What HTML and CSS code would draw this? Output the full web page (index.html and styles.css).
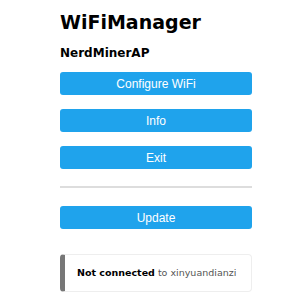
FILE: index.html
```html
<!DOCTYPE html>
<html lang="en">
<head>
  <meta charset="UTF-8">
  <title>WiFiManager</title>
  <link rel="stylesheet" href="styles.css">
</head>
<body>
  <div class="wrap">
    <h1>WiFiManager</h1>
    <h3>NerdMinerAP</h3>
    <form action="/wifi"><button>Configure WiFi</button></form>
    <form action="/info"><button>Info</button></form>
    <form action="/exit"><button>Exit</button></form>
    <hr>
    <form action="/update"><button>Update</button></form>
    <div class="msg"><strong>Not connected</strong> to xinyuandianzi</div>
  </div>
</body>
</html>
```

FILE: styles.css
```css
body {
  margin: 0;
  padding: 10px 48px 0 60px;
  font-family: "DejaVu Sans", Verdana, sans-serif;
  background: #fff;
}

.wrap {
  display: flex;
  flex-direction: column;
}

h1 {
  margin: 0 0 12px;
  font-size: 19px;
  line-height: 24px;
  color: #000;
}

h3 {
  margin: 0 0 12px;
  font-size: 12px;
  line-height: 14px;
  color: #000;
}

form {
  margin: 0 0 14px;
}

button {
  display: block;
  width: 100%;
  height: 23px;
  padding: 0;
  border: 0;
  border-radius: 3px;
  background-color: #1fa3ec;
  color: #fff;
  font-family: "Liberation Sans", Arial, sans-serif;
  font-size: 12px;
  cursor: pointer;
}

hr {
  margin: 3px 0 18px;
  border: 0;
  border-top: 2px solid #ddd;
}

.msg {
  margin-top: 11px;
  height: 38px;
  box-sizing: border-box;
  padding: 0 12px;
  border: 1px solid #eee;
  border-left: 5px solid #777;
  border-radius: 4px;
  font-size: 9.5px;
  line-height: 36px;
  white-space: nowrap;
  color: #555;
}

.msg strong {
  color: #000;
}
```
